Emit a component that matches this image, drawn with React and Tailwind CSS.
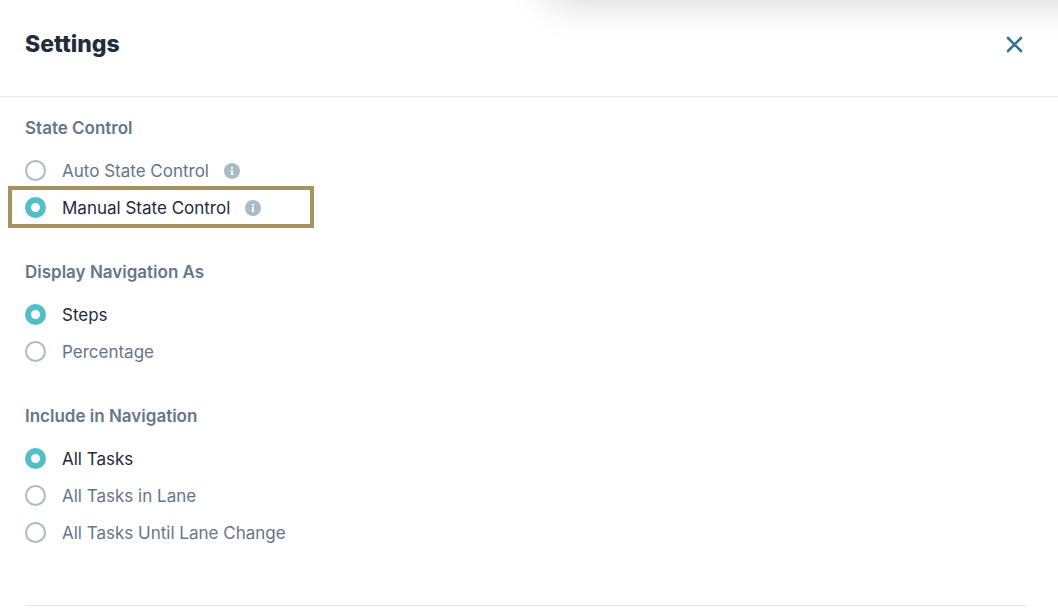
import React, { useState } from 'react';
import clsx from 'clsx';

const groups = [
  {
    name: 'state-control',
    title: 'State Control',
    initial: 'manual',
    options: [
      { value: 'auto', label: 'Auto State Control', info: true },
      { value: 'manual', label: 'Manual State Control', info: true, highlight: true },
    ],
  },
  {
    name: 'display-navigation',
    title: 'Display Navigation As',
    initial: 'steps',
    options: [
      { value: 'steps', label: 'Steps' },
      { value: 'percentage', label: 'Percentage' },
    ],
  },
  {
    name: 'include-navigation',
    title: 'Include in Navigation',
    initial: 'all',
    options: [
      { value: 'all', label: 'All Tasks' },
      { value: 'lane', label: 'All Tasks in Lane' },
      { value: 'until-change', label: 'All Tasks Until Lane Change' },
    ],
  },
];

const InfoIcon = () => (
  <svg viewBox="0 0 16 16" className="mt-px h-4 w-4" aria-hidden="true">
    <circle cx="8" cy="8" r="8" fill="#a9bac8" />
    <path d="M7 4h2v1.8H7zM6.6 7H9v4h.5v1h-3v-1H7V8h-.4z" fill="#fff" />
  </svg>
);

const RadioOption = ({ name, option, checked, onChange }) => (
  <div className="relative flex h-[37px] items-center">
    <label className="flex cursor-pointer items-center gap-4">
      <input
        type="radio"
        name={name}
        value={option.value}
        checked={checked}
        onChange={() => onChange(option.value)}
        className="h-[21px] w-[21px] shrink-0 appearance-none rounded-full border-2 border-[#a9bac8] bg-white checked:border-[6px] checked:border-[#52bfc7]"
      />
      <span className={clsx('text-[17px] leading-6', checked ? 'text-[#1f2a3a]' : 'text-[#65768a]')}>
        {option.label}
      </span>
    </label>
    {option.info && (
      <button type="button" aria-label={`About ${option.label}`} className="ml-[15px]">
        <InfoIcon />
      </button>
    )}
    {option.highlight && (
      <span className="pointer-events-none absolute -top-[3px] -bottom-[2px] -left-[17px] w-[306px] border-4 border-[#a5925e]" />
    )}
  </div>
);

const RadioGroup = ({ group }) => {
  const [selected, setSelected] = useState(group.initial);

  return (
    <fieldset>
      <legend className="mb-3 text-[17px] leading-6 font-semibold text-[#65768a]">{group.title}</legend>
      {group.options.map((option) => (
        <RadioOption
          key={option.value}
          name={group.name}
          option={option}
          checked={selected === option.value}
          onChange={setSelected}
        />
      ))}
    </fieldset>
  );
};

const App = () => (
  <div className="relative min-h-screen overflow-hidden bg-white font-['Inter',sans-serif]">
    {/* Shadow cast by the panel above */}
    <div className="pointer-events-none absolute -top-16 -right-16 left-[548px] h-16 shadow-[0_0_40px_rgba(0,0,0,0.18)]" />

    <header className="flex h-[97px] items-center justify-between border-b border-[#e4eaf1] pr-8 pb-2 pl-[25px]">
      <h1 className="text-[23px] leading-8 font-extrabold text-[#222e3c]">Settings</h1>
      <button type="button" aria-label="Close" className="text-[#35738a]">
        <svg viewBox="0 0 24 24" className="h-6 w-6" fill="none" stroke="currentColor" strokeWidth="2.6" strokeLinecap="round">
          <path d="M6 6l13 13M19 6L6 19" />
        </svg>
      </button>
    </header>

    <main className="mr-[31px] ml-[25px] border-b border-[#e8e8e8] pt-[19px] pb-[54px]">
      <form className="flex flex-col gap-[34px]">
        {groups.map((group) => (
          <RadioGroup key={group.name} group={group} />
        ))}
      </form>
    </main>
  </div>
);

export default App;
